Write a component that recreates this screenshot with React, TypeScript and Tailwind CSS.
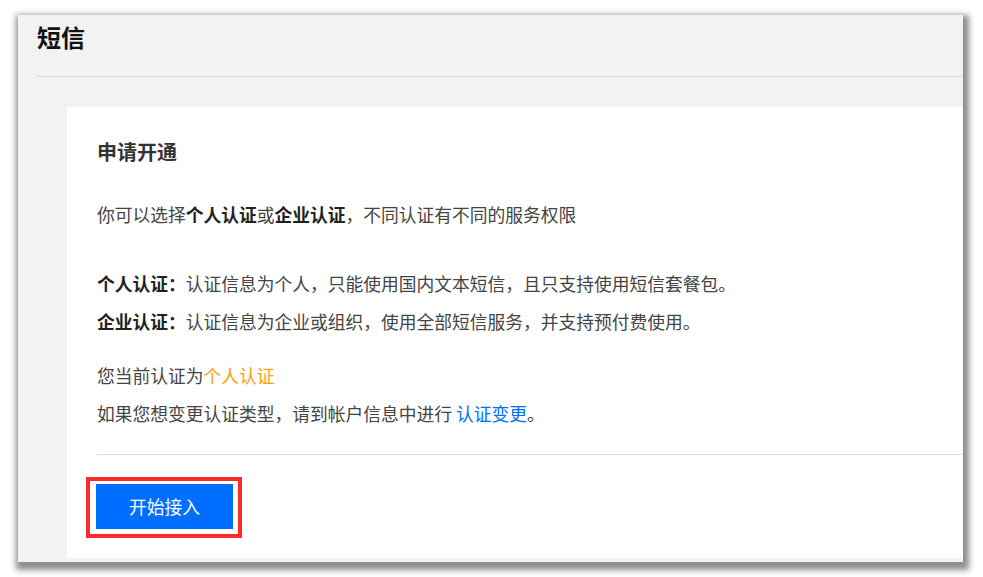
const cjk = { fontFamily: '"Noto Sans CJK SC", "Noto Sans", sans-serif' };

export default function App() {
  return (
    <div className="min-h-[577px] bg-white pt-[15px] pl-[18px]" style={cjk}>
      <div className="w-[945px] h-[547px] overflow-hidden bg-[#f2f2f2] shadow-[2px_4px_6px_4px_rgba(0,0,0,0.45)] pl-[19px]">
        {/* page header */}
        <div className="h-[62px] border-b border-[#dadada] pt-[6px]">
          <h1 className="text-[24px] leading-[32px] font-bold text-[#111]">短信</h1>
        </div>

        {/* card */}
        <div className="mt-[30px] ml-[30px] bg-white pl-[30px] pb-[29px]">
          <div className="pt-[31px]">
            <h2 className="text-[20px] leading-[28px] font-bold text-[#333]">申请开通</h2>
          </div>

          <div className="text-[17.75px] leading-[38px] text-[#444]">
            <p className="mt-[29px]">
              你可以选择<b className="text-[#222]">个人认证</b>或<b className="text-[#222]">企业认证</b>，不同认证有不同的服务权限
            </p>
            <p className="mt-[31px]">
              <b className="text-[#222]">个人认证：</b>认证信息为个人，只能使用国内文本短信，且只支持使用短信套餐包。
            </p>
            <p>
              <b className="text-[#222]">企业认证：</b>认证信息为企业或组织，使用全部短信服务，并支持预付费使用。
            </p>
            <p className="mt-[16px]">
              您当前认证为<span className="text-[#ff9c19]">个人认证</span>
            </p>
            <p>
              如果您想变更认证类型，请到帐户信息中进行 <a className="text-[#006eff]">认证变更</a>。
            </p>
          </div>

          <div className="mt-[22px] border-t border-[#dcdcdc]" />

          <div className="mt-[29px] ml-[-1px]">
            <button className="relative w-[137px] h-[45px] bg-[#006eff] text-white text-[17.75px]">
              开始接入
              <span className="absolute top-[-7px] bottom-[-9px] left-[-10px] right-[-9px] border-[4px] border-[#ff2b2b]" />
            </button>
          </div>
        </div>
      </div>
    </div>
  );
}
